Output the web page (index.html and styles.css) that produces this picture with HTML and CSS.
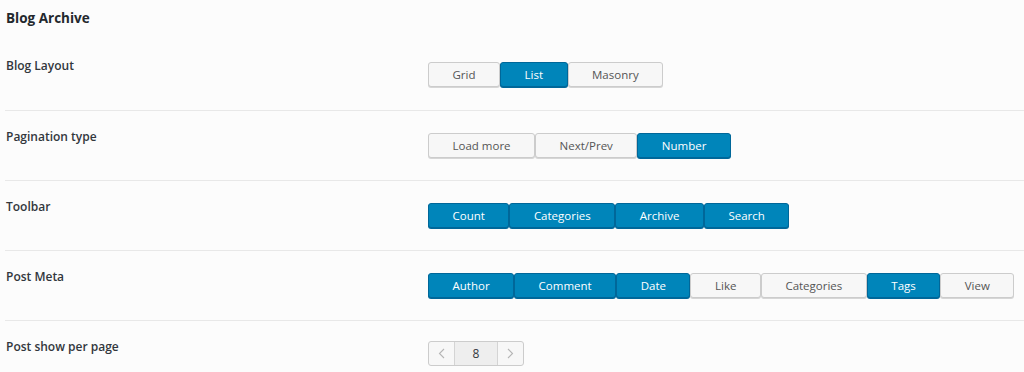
FILE: index.html
```html
<!DOCTYPE html>
<html>
<head>
<meta charset="utf-8">
<link rel="stylesheet" href="styles.css">
</head>
<body>
<div class="panel">
  <h2 class="title">Blog Archive</h2>
  <div class="row first">
    <div class="label">Blog Layout</div>
    <div class="control">
      <div class="btnset">
        <span class="btn">Grid</span>
        <span class="btn on">List</span>
        <span class="btn">Masonry</span>
      </div>
    </div>
  </div>
  <div class="row">
    <div class="label">Pagination type</div>
    <div class="control">
      <div class="btnset">
        <span class="btn">Load more</span>
        <span class="btn">Next/Prev</span>
        <span class="btn on">Number</span>
      </div>
    </div>
  </div>
  <div class="row">
    <div class="label">Toolbar</div>
    <div class="control">
      <div class="btnset">
        <span class="btn on">Count</span>
        <span class="btn on">Categories</span>
        <span class="btn on">Archive</span>
        <span class="btn on">Search</span>
      </div>
    </div>
  </div>
  <div class="row">
    <div class="label">Post Meta</div>
    <div class="control">
      <div class="btnset">
        <span class="btn on">Author</span>
        <span class="btn on">Comment</span>
        <span class="btn on">Date</span>
        <span class="btn">Like</span>
        <span class="btn">Categories</span>
        <span class="btn on">Tags</span>
        <span class="btn">View</span>
      </div>
    </div>
  </div>
  <div class="row">
    <div class="label">Post show per page</div>
    <div class="control">
      <div class="stepper">
        <span class="step"><svg width="7" height="11" viewBox="0 0 7 11"><path d="M6 1 L1.5 5.5 L6 10" fill="none" stroke="#b5b5b5" stroke-width="1.1"/></svg></span>
        <span class="value">8</span>
        <span class="step"><svg width="7" height="11" viewBox="0 0 7 11"><path d="M1 1 L5.5 5.5 L1 10" fill="none" stroke="#b5b5b5" stroke-width="1.1"/></svg></span>
      </div>
    </div>
  </div>
</div>
</body>
</html>
```
FILE: styles.css
```css
html, body {
  margin: 0;
  padding: 0;
  background: #fcfcfc;
}
body {
  font-family: "Open Sans", "Noto Sans", sans-serif;
  color: #23282d;
}
.panel {
  padding-left: 5px;
}
.title {
  margin: 0;
  height: 40px;
  padding: 8px 0 0 1px;
  box-sizing: border-box;
  font-size: 13.5px;
  font-weight: 700;
  line-height: 20px;
  color: #23282d;
}
.row {
  display: flex;
  border-top: 1px solid #e8e8e8;
  padding: 17px 0 21px 0;
  height: 70px;
  box-sizing: border-box;
}
.row.first {
  border-top: none;
  padding-top: 17px;
}
.label {
  width: 422px;
  flex: none;
  padding-left: 1px;
  box-sizing: border-box;
  font-size: 12px;
  font-weight: 600;
  line-height: 18px;
  color: #32373c;
}
.control {
  margin-top: 5px;
  margin-left: 1px;
}
.btnset {
  display: flex;
}
.btn {
  display: block;
  height: 25px;
  box-sizing: border-box;
  padding: 0 23.5px;
  border: 1px solid #cccccc;
  border-radius: 3px;
  background: #f7f7f7;
  box-shadow: 0 1px 0 #d6d6d6;
  color: #555555;
  font-size: 11.5px;
  line-height: 23px;
  text-align: center;
}
.btn.on {
  background: #0085ba;
  border-color: #006799;
  box-shadow: 0 1px 0 #006799;
  color: #ffffff;
}
.stepper {
  display: flex;
  height: 25px;
  box-sizing: border-box;
  border: 1px solid #cccccc;
  border-radius: 3px;
  background: #f7f7f7;
  margin-top: -2px;
}
.step {
  width: 25px;
  display: flex;
  align-items: center;
  justify-content: center;
}
.value {
  width: 42px;
  background: #eeeeee;
  border-left: 1px solid #d4d4d4;
  border-right: 1px solid #d4d4d4;
  text-align: center;
  font-size: 12px;
  line-height: 23px;
  color: #32373c;
}
```
